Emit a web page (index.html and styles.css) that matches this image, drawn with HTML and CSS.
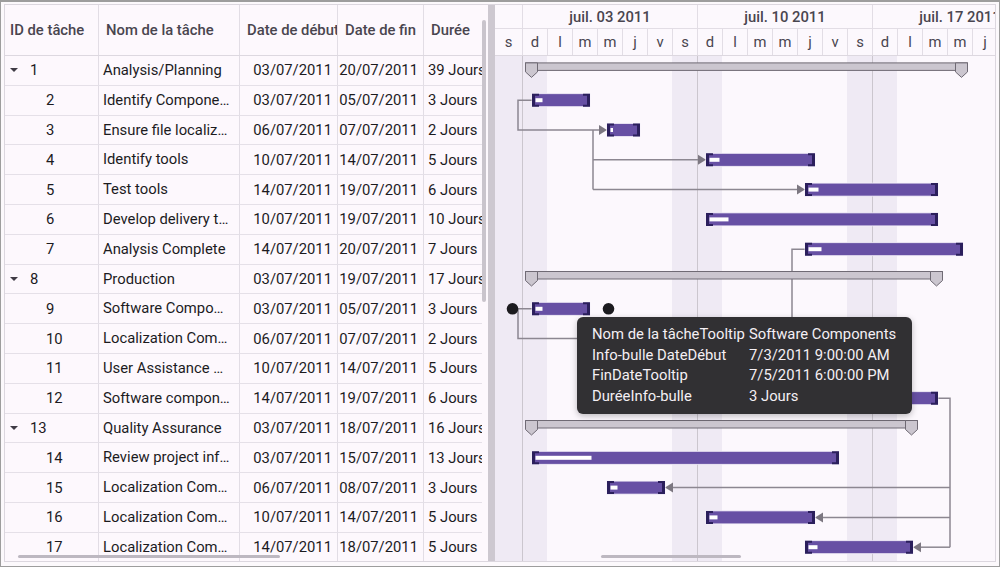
FILE: index.html
```html
<!DOCTYPE html>
<html lang="fr">
<head>
<meta charset="utf-8">
<title>Gantt</title>
<link rel="stylesheet" href="styles.css">
</head>
<body>
<div class="frame">
  <div class="gantt">
    <div class="grid-pane">
      <div class="ghead">
        <div class="hc">ID de tâche</div>
        <div class="hc">Nom de la tâche</div>
        <div class="hc">Date de début</div>
        <div class="hc">Date de fin</div>
        <div class="hc">Durée</div>
      </div>
      <div class="gbody">
        <div class="row"><div class="c id parent"><span class="caret"></span>1</div><div class="c name">Analysis/Planning</div><div class="c date">03/07/2011</div><div class="c date">20/07/2011</div><div class="c dur">39 Jours</div></div>
        <div class="row"><div class="c id">2</div><div class="c name">Identify Components to be Localized</div><div class="c date">03/07/2011</div><div class="c date">05/07/2011</div><div class="c dur">3 Jours</div></div>
        <div class="row"><div class="c id">3</div><div class="c name">Ensure file localizability</div><div class="c date">06/07/2011</div><div class="c date">07/07/2011</div><div class="c dur">2 Jours</div></div>
        <div class="row"><div class="c id">4</div><div class="c name">Identify tools</div><div class="c date">10/07/2011</div><div class="c date">14/07/2011</div><div class="c dur">5 Jours</div></div>
        <div class="row"><div class="c id">5</div><div class="c name">Test tools</div><div class="c date">14/07/2011</div><div class="c date">19/07/2011</div><div class="c dur">6 Jours</div></div>
        <div class="row"><div class="c id">6</div><div class="c name">Develop delivery timeline</div><div class="c date">10/07/2011</div><div class="c date">19/07/2011</div><div class="c dur">10 Jours</div></div>
        <div class="row"><div class="c id">7</div><div class="c name">Analysis Complete</div><div class="c date">14/07/2011</div><div class="c date">20/07/2011</div><div class="c dur">7 Jours</div></div>
        <div class="row"><div class="c id parent"><span class="caret"></span>8</div><div class="c name">Production</div><div class="c date">03/07/2011</div><div class="c date">19/07/2011</div><div class="c dur">17 Jours</div></div>
        <div class="row"><div class="c id">9</div><div class="c name">Software Components</div><div class="c date">03/07/2011</div><div class="c date">05/07/2011</div><div class="c dur">3 Jours</div></div>
        <div class="row"><div class="c id">10</div><div class="c name">Localization Component - User Interface</div><div class="c date">06/07/2011</div><div class="c date">07/07/2011</div><div class="c dur">2 Jours</div></div>
        <div class="row"><div class="c id">11</div><div class="c name">User Assistance Components</div><div class="c date">10/07/2011</div><div class="c date">14/07/2011</div><div class="c dur">5 Jours</div></div>
        <div class="row"><div class="c id">12</div><div class="c name">Software components complete</div><div class="c date">14/07/2011</div><div class="c date">19/07/2011</div><div class="c dur">6 Jours</div></div>
        <div class="row"><div class="c id parent"><span class="caret"></span>13</div><div class="c name">Quality Assurance</div><div class="c date">03/07/2011</div><div class="c date">18/07/2011</div><div class="c dur">16 Jours</div></div>
        <div class="row"><div class="c id">14</div><div class="c name">Review project information</div><div class="c date">03/07/2011</div><div class="c date">15/07/2011</div><div class="c dur">13 Jours</div></div>
        <div class="row"><div class="c id">15</div><div class="c name">Localization Component - Software</div><div class="c date">06/07/2011</div><div class="c date">08/07/2011</div><div class="c dur">3 Jours</div></div>
        <div class="row"><div class="c id">16</div><div class="c name">Localization Component - User Assistance</div><div class="c date">10/07/2011</div><div class="c date">14/07/2011</div><div class="c dur">5 Jours</div></div>
        <div class="row"><div class="c id">17</div><div class="c name">Localization Component - Help</div><div class="c date">14/07/2011</div><div class="c date">18/07/2011</div><div class="c dur">5 Jours</div></div>
      </div>
      <div class="vtrack"><div class="vthumb"></div></div>
      <div class="hthumb grid-h"></div>
    </div>
    <div class="splitter"></div>
    <div class="chart-pane">
      <div class="tier top">
        <div class="tc first"></div>
        <div class="tc week">juil. 03 2011</div>
        <div class="tc week">juil. 10 2011</div>
        <div class="tc week">juil. 17 2011</div>
      </div>
      <div class="tier bottom">
        <div class="dc first">s</div>
        <div class="dc">d</div><div class="dc">l</div><div class="dc">m</div><div class="dc">m</div><div class="dc">j</div><div class="dc">v</div><div class="dc">s</div>
        <div class="dc">d</div><div class="dc">l</div><div class="dc">m</div><div class="dc">m</div><div class="dc">j</div><div class="dc">v</div><div class="dc">s</div>
        <div class="dc">d</div><div class="dc">l</div><div class="dc">m</div><div class="dc">m</div><div class="dc">j</div><div class="dc">v</div><div class="dc">s</div>
      </div>
      <svg class="chart-body" width="500" height="506" viewBox="0 0 500 506">
        <defs>
          <path id="lc" d="M0 0h7v2h-4v9h4v2h-7z" fill="#2b1f5c"/>
          <path id="rc" d="M0 0h-7v2h4v9h-4v2h7z" fill="#2b1f5c"/>
          <path id="pm" d="M0 0h12v9l-6 5.5l-6-5.5z" fill="#cbc6cf" stroke="#6f6a74" stroke-width="1"/>
        </defs>
        <rect x="0" y="0" width="52" height="506" fill="#efeaf4"/>
        <rect x="177" y="0" width="50" height="506" fill="#efeaf4"/>
        <rect x="352" y="0" width="50" height="506" fill="#efeaf4"/>
        <g stroke="#cbc6ce" stroke-width="1">
          <line x1="27.5" y1="0" x2="27.5" y2="506"/>
          <line x1="202.5" y1="0" x2="202.5" y2="506"/>
          <line x1="377.5" y1="0" x2="377.5" y2="506"/>
        </g>
        <g fill="none" stroke="#8c8791" stroke-width="1.5">
          <path d="M37 44.2H23V74H104"/>
          <path d="M98 74V133.6"/>
          <path d="M98 103.8H203"/>
          <path d="M98 133.6H302"/>
          <path d="M310 193.2H297V312.4H203"/>
          <path d="M37 252.8H23V282.6H104"/>
          <path d="M443 342.2H455V491.2"/>
          <path d="M455 431.6H178"/>
          <path d="M455 461.4H328"/>
          <path d="M455 491.2H426"/>
        </g>
        <g fill="#7c7781">
          <polygon points="104,69 112,74 104,79"/>
          <polygon points="203,98.8 211,103.8 203,108.8"/>
          <polygon points="302,128.6 310,133.6 302,138.6"/>
          <polygon points="203,307.4 211,312.4 203,317.4"/>
          <polygon points="104,277.6 112,282.6 104,287.6"/>
          <polygon points="178,426.6 170,431.6 178,436.6"/>
          <polygon points="328,456.4 320,461.4 328,466.4"/>
          <polygon points="426,486.2 418,491.2 426,496.2"/>
        </g>
        <g fill="#cbc6cf" stroke="#6f6a74" stroke-width="1">
          <rect x="30.5" y="6.9" width="442" height="7.5"/>
          <rect x="30.5" y="215.5" width="417" height="7.5"/>
          <rect x="30.5" y="364.5" width="392" height="7.5"/>
        </g>
        <use href="#pm" x="30.5" y="6.9"/>
        <use href="#pm" x="460.5" y="6.9"/>
        <use href="#pm" x="30.5" y="215.5"/>
        <use href="#pm" x="435.5" y="215.5"/>
        <use href="#pm" x="30.5" y="364.5"/>
        <use href="#pm" x="410.5" y="364.5"/>
        <g fill="#6750a4" stroke="#f4f0fa" stroke-width="0.8">
          <rect x="37" y="37.7" width="58" height="13"/>
          <rect x="112" y="67.5" width="33" height="13"/>
          <rect x="211" y="97.3" width="109" height="13"/>
          <rect x="310" y="127.1" width="133" height="13"/>
          <rect x="211" y="156.9" width="232" height="13"/>
          <rect x="310" y="186.7" width="158" height="13"/>
          <rect x="37" y="246.3" width="58" height="13"/>
          <rect x="112" y="276.1" width="33" height="13"/>
          <rect x="211" y="305.9" width="109" height="13"/>
          <rect x="310" y="335.7" width="133" height="13"/>
          <rect x="37" y="395.3" width="307" height="13"/>
          <rect x="112" y="425.1" width="58" height="13"/>
          <rect x="211" y="454.9" width="109" height="13"/>
          <rect x="310" y="484.7" width="108" height="13"/>
        </g>
        <g fill="#ffffff">
          <rect x="40.5" y="42.2" width="7" height="4"/>
          <rect x="115.5" y="72" width="2.5" height="4"/>
          <rect x="214.5" y="101.8" width="10" height="4"/>
          <rect x="313.5" y="131.6" width="10" height="4"/>
          <rect x="214.5" y="161.4" width="19" height="4"/>
          <rect x="313.5" y="191.2" width="13" height="4"/>
          <rect x="40.5" y="250.8" width="7" height="4"/>
          <rect x="115.5" y="280.6" width="2.5" height="4"/>
          <rect x="214.5" y="310.4" width="10" height="4"/>
          <rect x="313.5" y="340.2" width="10" height="4"/>
          <rect x="40.5" y="399.8" width="56" height="4"/>
          <rect x="115.5" y="429.6" width="7" height="4"/>
          <rect x="214.5" y="459.4" width="8" height="4"/>
          <rect x="313.5" y="489.2" width="9" height="4"/>
        </g>
        <use href="#lc" x="37" y="37.7"/><use href="#rc" x="95" y="37.7"/>
        <use href="#lc" x="112" y="67.5"/><use href="#rc" x="145" y="67.5"/>
        <use href="#lc" x="211" y="97.3"/><use href="#rc" x="320" y="97.3"/>
        <use href="#lc" x="310" y="127.1"/><use href="#rc" x="443" y="127.1"/>
        <use href="#lc" x="211" y="156.9"/><use href="#rc" x="443" y="156.9"/>
        <use href="#lc" x="310" y="186.7"/><use href="#rc" x="468" y="186.7"/>
        <use href="#lc" x="37" y="246.3"/><use href="#rc" x="95" y="246.3"/>
        <use href="#lc" x="112" y="276.1"/><use href="#rc" x="145" y="276.1"/>
        <use href="#lc" x="211" y="305.9"/><use href="#rc" x="320" y="305.9"/>
        <use href="#lc" x="310" y="335.7"/><use href="#rc" x="443" y="335.7"/>
        <use href="#lc" x="37" y="395.3"/><use href="#rc" x="344" y="395.3"/>
        <use href="#lc" x="112" y="425.1"/><use href="#rc" x="170" y="425.1"/>
        <use href="#lc" x="211" y="454.9"/><use href="#rc" x="320" y="454.9"/>
        <use href="#lc" x="310" y="484.7"/><use href="#rc" x="418" y="484.7"/>
        <circle cx="17.5" cy="252.8" r="5.8" fill="#1c1b1f"/>
        <circle cx="113.5" cy="252.8" r="5.8" fill="#1c1b1f"/>
      </svg>
      <div class="hthumb chart-h"></div>
      <div class="tooltip">
        <div class="tt-l">Nom de la tâcheTooltip</div><div class="tt-v">Software Components</div>
        <div class="tt-l">Info-bulle DateDébut</div><div class="tt-v">7/3/2011 9:00:00 AM</div>
        <div class="tt-l">FinDateTooltip</div><div class="tt-v">7/5/2011 6:00:00 PM</div>
        <div class="tt-l">DuréeInfo-bulle</div><div class="tt-v">3 Jours</div>
      </div>
    </div>
  </div>
</div>
</body>
</html>
```

FILE: styles.css
```css
* { box-sizing: border-box; }
html, body { margin: 0; padding: 0; background: #ffffff; }
body { font-family: Roboto, "Noto Sans", "Liberation Sans", sans-serif; font-size: 14.8px; }

.frame {
  width: 1000px;
  height: 567px;
  border: 1px solid #9d9d9d;
  border-top-width: 2px;
  padding: 2px 3px 4px 3px;
  background: #fcf9fc;
}

.gantt {
  display: flex;
  height: 100%;
  border: 1px solid #dcd7df;
  background: #fdf8fd;
  overflow: hidden;
}

/* ---------- grid ---------- */
.grid-pane {
  position: relative;
  width: 483px;
  flex: none;
  overflow: hidden;
}
.ghead, .row {
  display: grid;
  grid-template-columns: 94px 141px 98px 86px 110px;
  width: 529px;
}
.ghead { height: 51px; border-bottom: 1px solid #ddd8e0; }
.hc {
  display: flex;
  align-items: center;
  padding: 0 3px 0 7px;
  border-right: 1px solid #e2dde5;
  color: #49454f;
  font-weight: 500;
  white-space: nowrap;
  overflow: hidden;
}
.hc:first-child { padding-left: 5px; }

.row { height: 29.8px; }
.c {
  display: flex;
  align-items: center;
  border-right: 1px solid #e2dde5;
  border-bottom: 1px solid #e5e0e8;
  color: #1c1b1f;
  white-space: nowrap;
  overflow: hidden;
}
.c.id { padding-left: 41px; }
.c.id.parent { padding-left: 5px; }
.caret {
  width: 0; height: 0;
  border-left: 4px solid transparent;
  border-right: 4px solid transparent;
  border-top: 4.5px solid #3f3b45;
  margin-right: 12px;
}
.c.name {
  display: block;
  line-height: 28.8px;
  padding: 0 9px 0 4px;
  text-overflow: ellipsis;
}
.c.date { justify-content: flex-end; padding-right: 5px; }
.c.dur { padding-left: 4px; }

.vtrack {
  position: absolute;
  top: 0;
  right: 0;
  bottom: 0;
  width: 6px;
  background: #fdf8fd;
}
.vthumb {
  margin: 15px 0 0 0;
  width: 4px;
  height: 282px;
  border-radius: 2px;
  background: #c9c4cc;
}
.hthumb {
  position: absolute;
  top: 550px;
  height: 3px;
  border-radius: 2px;
  background: #bdb8c1;
}
.grid-h { left: 13px; width: 262px; }

.splitter {
  width: 7px;
  flex: none;
  background: #cdc8d0;
}

/* ---------- chart ---------- */
.chart-pane {
  position: relative;
  flex: 1;
  overflow: hidden;
  background: #fcf8fd;
}
.tier { display: flex; white-space: nowrap; }
.tier.top { height: 24px; border-bottom: 1px solid #e2dde5; }
.tier.bottom { height: 27px; border-bottom: 1px solid #ddd8e0; }
.tc {
  flex: none;
  width: 175px;
  border-right: 1px solid #e2dde5;
  display: flex;
  align-items: center;
  justify-content: center;
  color: #49454f;
  font-weight: 500;
}
.tc.first { width: 28px; }
.dc {
  flex: none;
  width: 25px;
  border-right: 1px solid #e2dde5;
  display: flex;
  align-items: center;
  justify-content: center;
  color: #49454f;
}
.dc.first { width: 28px; }

.chart-body { display: block; }

.chart-h { left: 106px; width: 140px; }

.tooltip {
  position: absolute;
  left: 82px;
  top: 312px;
  width: 335px;
  height: 97px;
  padding: 7px 10px 0 15px;
  background: #313033;
  border-radius: 6px;
  box-shadow: 0 2px 6px rgba(0,0,0,0.25);
  color: #f4eff4;
  display: grid;
  grid-template-columns: 157px auto;
  grid-auto-rows: 20.5px;
  align-items: center;
  white-space: nowrap;
}
```
